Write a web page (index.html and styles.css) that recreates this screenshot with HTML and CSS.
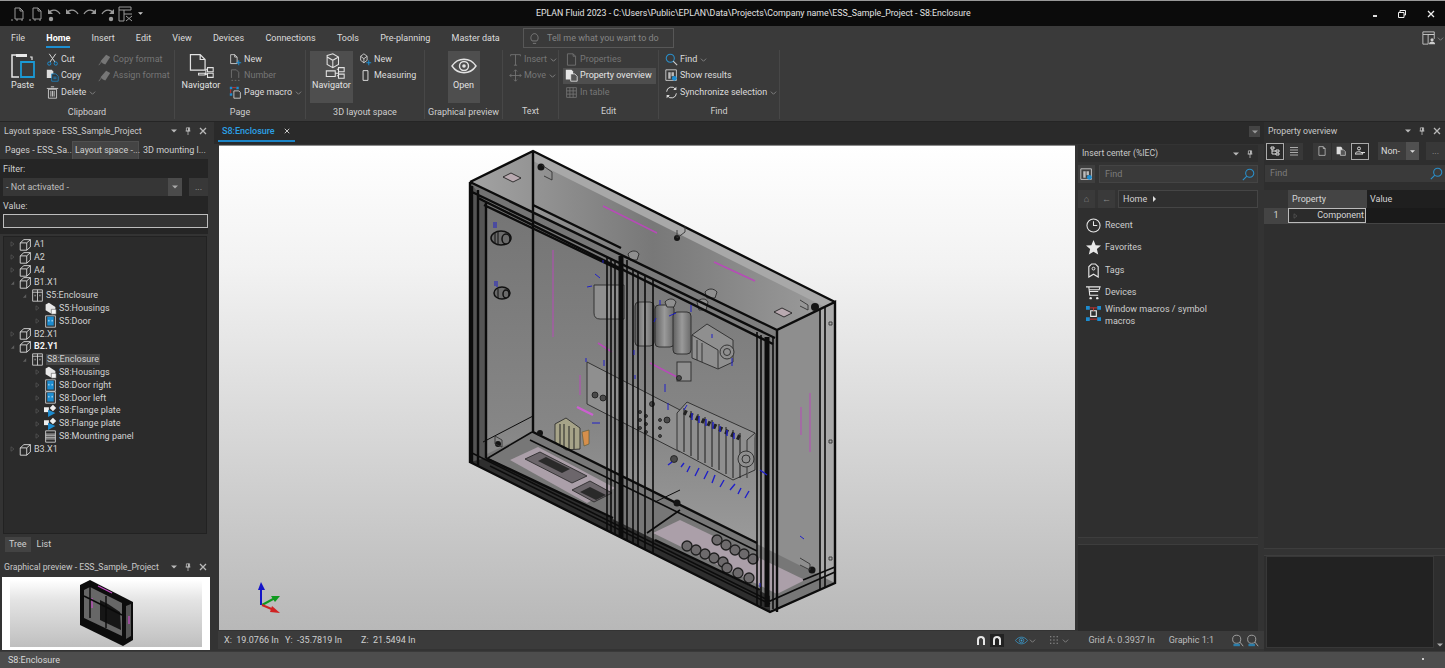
FILE: index.html
```html
<!DOCTYPE html>
<html lang="en">
<head>
<meta charset="utf-8">
<title>EPLAN Fluid 2023</title>
<link rel="stylesheet" href="styles.css">
</head>
<body>
<svg class="defs" aria-hidden="true">
  <symbol id="i-page" viewBox="0 0 16 16"><path d="M5 13V2h5l3 3v8zM10 2v3h3" fill="none" stroke="currentColor"/><path d="M1 14h14" stroke="currentColor" stroke-dasharray="2 3"/></symbol>
  <symbol id="i-undo" viewBox="0 0 16 16"><path d="M3 7c2-4 8-4 11 1" fill="none" stroke="currentColor" stroke-width="1.300"/><path d="M2 3v5h5z" fill="currentColor"/></symbol>
  <symbol id="i-undod" viewBox="0 0 16 16"><path d="M3 7c2-4 8-4 11 1" fill="none" stroke="currentColor" stroke-width="1.300"/><path d="M2 3v5h5z" fill="currentColor"/><circle cx="5" cy="13" r="2.200" fill="currentColor"/></symbol>
  <symbol id="i-redo" viewBox="0 0 16 16"><path d="M13 7c-2-4-8-4-11 1" fill="none" stroke="currentColor" stroke-width="1.300"/><path d="M14 3v5H9z" fill="currentColor"/></symbol>
  <symbol id="i-redod" viewBox="0 0 16 16"><path d="M13 7c-2-4-8-4-11 1" fill="none" stroke="currentColor" stroke-width="1.300"/><path d="M14 3v5H9z" fill="currentColor"/><circle cx="11" cy="13" r="2.200" fill="currentColor"/></symbol>
  <symbol id="i-tbl" viewBox="0 0 16 16"><path d="M1 1h12v3H1zM1 4v11h5V4M6 8h8M8 10l6 5M14 10l-6 5" fill="none" stroke="currentColor"/></symbol>
  <symbol id="i-lay" viewBox="0 0 16 16"><path d="M1 1h13v3H1zM1 4v11h6V4M7 4h7v5" fill="none" stroke="currentColor"/><circle cx="11.500" cy="10" r="1.800" fill="currentColor"/><path d="M8 15c0-4 7-4 7 0z" fill="currentColor"/></symbol>
  <symbol id="i-cube" viewBox="0 0 16 16"><path d="M1.500 6 6 2h8v9l-4.500 4h-8zM1.500 6h8v9M9.500 6 14 2" fill="none" stroke="currentColor" stroke-width="1.100"/></symbol>
  <symbol id="i-encl" viewBox="0 0 16 16"><path d="M2 1h12v14H2zM8 1v14M5 7v2M11 7v2M2 4h12" fill="none" stroke="currentColor"/></symbol>
  <symbol id="i-house" viewBox="0 0 16 16"><path d="M2 3 6 1l8 5v8l-4 1-8-5z" fill="#e8e8e8"/><path d="M9 9h6v6H9z" fill="#f6f6f6" stroke="#333" stroke-width=".6"/></symbol>
  <symbol id="i-door" viewBox="0 0 16 16"><path d="M2 1h12v14H2z" fill="none" stroke="#ddd"/><path d="M4 2h8v11H4z" fill="#1c8cd0"/><path d="M6 6v2M10 6v2" stroke="#fff"/></symbol>
  <symbol id="i-flange" viewBox="0 0 16 16"><path d="M0 4h6v6H0z" fill="#eee"/><path d="M7 5l4-4 4 4-4 4z" fill="#eee"/><path d="M5 7l9 4-9 5z" fill="#1c8cd0"/></symbol>
  <symbol id="i-panel" viewBox="0 0 16 16"><path d="M2 1h12v14H2zM2 5h12M2 11h12M2 7h12M2 9h12" fill="none" stroke="#ddd"/></symbol>
  <symbol id="i-nav" viewBox="0 0 32 32"><path d="M3 2h12l6 6v13H3zM15 2v6h6" fill="none" stroke="currentColor" stroke-width="1.500"/><path d="M13 27h8v-2h-8zM24 18h7v5h-7zM24 25h7v5h-7zM21 26h3M22 20h2M22 20v7" fill="none" stroke="currentColor" stroke-width="1.300"/></symbol>
  <symbol id="i-nav3" viewBox="0 0 32 32"><path d="M10 3 17 1l7 4v9l-7 4-7-4zM10 5l7 4 7-4M17 9v9" fill="none" stroke="currentColor" stroke-width="1.300"/><path d="M9 22h11v7H9zM24 18h7v5h-7zM24 26h7v5h-7zM20 25h4M22 20h2v8h-2" fill="none" stroke="currentColor" stroke-width="1.300"/></symbol>
  <symbol id="i-paste" viewBox="0 0 26 26"><path d="M9 2H2v22h7" fill="none" stroke="#e8e8e8" stroke-width="1.500"/><path d="M6 1h11v3H6z" fill="#e8e8e8"/><path d="M11 9h13v15H11z" fill="none" stroke="#1b9ad6" stroke-width="1.800"/><path d="M20 4h2v3" fill="none" stroke="#e8e8e8" stroke-width="1.200"/></symbol>
  <symbol id="i-cut" viewBox="0 0 16 16"><path d="M4 1l7 10M12 1 5 11" stroke="currentColor" fill="none" stroke-width="1.200"/><circle cx="4" cy="13" r="2" fill="none" stroke="#1c8cd0" stroke-width="1.200"/><circle cx="12" cy="13" r="2" fill="none" stroke="#1c8cd0" stroke-width="1.200"/></symbol>
  <symbol id="i-copy" viewBox="0 0 16 16"><path d="M1 1h6l2 2v8H1z" fill="currentColor"/><path d="M7 6h5l3 3v6H7z" fill="#333" stroke="#1c8cd0"/><path d="M9 10h4M9 12h4" stroke="#1c8cd0"/></symbol>
  <symbol id="i-del" viewBox="0 0 16 16"><path d="M3 4h10v11H3zM1 3h14M6 1h4M6 6v7M8 6v7M10 6v7" fill="none" stroke="currentColor"/></symbol>
  <symbol id="i-brush" viewBox="0 0 16 16"><path d="M3 10 10 2l5 3-6 9-3-1z" fill="currentColor"/><path d="M1 15l3-4" stroke="currentColor"/></symbol>
  <symbol id="i-newp" viewBox="0 0 16 16"><path d="M2 13V2h5l3 3v8zM7 2v3h3" fill="none" stroke="currentColor"/><path d="M12 9v6M9 12h6" stroke="#1c8cd0" stroke-width="1.300"/></symbol>
  <symbol id="i-num" viewBox="0 0 16 16"><path d="M3 11V1h6l3 3v7M3 14h2M7 14h2M11 14h2" fill="none" stroke="currentColor"/></symbol>
  <symbol id="i-macro" viewBox="0 0 16 16"><path d="M6 6h6l2 2v7H6z" fill="none" stroke="currentColor"/><path d="M1 1h3v3H1zM9 1h3v3H9zM1 9h3v3H1z" fill="#1c8cd0"/><path d="M4 2h5M2 4v5" stroke="#d33"/></symbol>
  <symbol id="i-cubeplus" viewBox="0 0 16 16"><path d="M2 4l4-3 4 3v5l-4 3-4-3zM2 4l4 3 4-3M6 7v5" fill="none" stroke="currentColor"/><path d="M12 9v6M9 12h6" stroke="#1c8cd0" stroke-width="1.300"/></symbol>
  <symbol id="i-meas" viewBox="0 0 16 16"><path d="M5 2h6v12H5z" fill="none" stroke="currentColor" stroke-width="1.200"/></symbol>
  <symbol id="i-eye" viewBox="0 0 26 26"><path d="M1 13C7 4 19 4 25 13 19 22 7 22 1 13z" fill="none" stroke="currentColor" stroke-width="1.400"/><circle cx="13" cy="13" r="4.500" fill="none" stroke="currentColor" stroke-width="1.400"/><circle cx="13" cy="13" r="1.800" fill="currentColor"/></symbol>
  <symbol id="i-t" viewBox="0 0 16 16"><path d="M2 4V2h12v2M8 2v13M6 15h4" fill="none" stroke="currentColor"/></symbol>
  <symbol id="i-move" viewBox="0 0 16 16"><path d="M8 1v14M1 8h14M6 3l2-2 2 2M6 13l2 2 2-2M3 6 1 8l2 2M13 6l2 2-2 2" fill="none" stroke="currentColor"/></symbol>
  <symbol id="i-doc" viewBox="0 0 16 16"><path d="M3 15V1h7l3 3v11zM10 1v3h3" fill="none" stroke="currentColor"/></symbol>
  <symbol id="i-ov" viewBox="0 0 16 16"><path d="M1 1h7l2 2v10H1z" fill="currentColor"/><path d="M7 6h5l3 3v6H7z" fill="#555" stroke="currentColor"/></symbol>
  <symbol id="i-grid" viewBox="0 0 16 16"><path d="M2 2h12v12H2zM2 6h12M2 10h12M6 2v12M10 2v12" fill="none" stroke="currentColor"/></symbol>
  <symbol id="i-find" viewBox="0 0 16 16"><circle cx="6.500" cy="6.500" r="5" fill="none" stroke="#2a8fca" stroke-width="1.300"/><path d="M10 10l5 5" stroke="#2a8fca" stroke-width="1.400"/></symbol>
  <symbol id="i-findr" viewBox="0 0 16 16"><circle cx="6.500" cy="6.500" r="5" fill="none" stroke="#2a8fca" stroke-width="1.300"/><path d="M10 10l5 5" stroke="#ccc" stroke-width="1.400"/></symbol>
  <symbol id="i-zoom" viewBox="0 0 16 16"><circle cx="7" cy="6.500" r="5" fill="none" stroke="#a8a8a8" stroke-width="1.100"/><path d="M11 10l4 5" stroke="#a8a8a8" stroke-width="1.200"/><path d="M3 12h8v3H3z" fill="#2b7ca8"/></symbol>
  <symbol id="i-res" viewBox="0 0 16 16"><path d="M1 1h13v13H1z" fill="none" stroke="#ddd"/><path d="M4 4h3v8H4zM8 4h3v5H8z" fill="#bbb"/><circle cx="11.500" cy="11.500" r="3" fill="#1c8cd0"/></symbol>
  <symbol id="i-sync" viewBox="0 0 16 16"><path d="M2 7a6 6 0 0 1 11-3M14 9A6 6 0 0 1 3 12" fill="none" stroke="#ddd" stroke-width="1.200"/><path d="M14 1v4h-4zM2 15v-4h4z" fill="#ddd"/></symbol>
  <symbol id="i-bulb" viewBox="0 0 16 16"><path d="M5 11C2 8 4 2 8 2s6 6 3 9zM6 14h4" fill="none" stroke="currentColor"/></symbol>
  <symbol id="i-clock" viewBox="0 0 16 16"><circle cx="8" cy="8" r="7" fill="none" stroke="currentColor" stroke-width="1.100"/><path d="M8 3.500V8h4" fill="none" stroke="currentColor" stroke-width="1.100"/></symbol>
  <symbol id="i-star" viewBox="0 0 16 16"><path d="M8 0l2.300 5.500 5.700.4-4.400 3.700 1.400 5.900L8 12.400l-5 3.100 1.400-5.900L0 5.900l5.700-.4z" fill="currentColor"/></symbol>
  <symbol id="i-tag" viewBox="0 0 16 16"><path d="M3 4l3-3h4l3 3v11l-5-3-5 3z" fill="none" stroke="currentColor" stroke-width="1.200"/><circle cx="8" cy="6" r="1.500" fill="none" stroke="currentColor"/></symbol>
  <symbol id="i-cart" viewBox="0 0 16 16"><path d="M0 2h15l-1 3H3M3 2l1 9h9M3 7h10" fill="none" stroke="currentColor" stroke-width="1.100"/><circle cx="5" cy="14" r="1.300" fill="currentColor"/><circle cx="12" cy="14" r="1.300" fill="currentColor"/></symbol>
  <symbol id="i-wm" viewBox="0 0 16 16"><path d="M5 5h6v6H5z" fill="none" stroke="#eee" stroke-width="1.200"/><path d="M3 2h10M3 14h10M8 2v3" stroke="#c33"/><path d="M0 0h4v4H0zM12 0h4v4h-4zM0 12h4v4H0zM12 12h4v4h-4z" fill="#1c8cd0"/></symbol>
  <symbol id="i-x" viewBox="0 0 8 8"><path d="M1 1l6 6M7 1 1 7" stroke="currentColor" stroke-width="1.300"/></symbol>
  <symbol id="i-rest" viewBox="0 0 8 8"><path d="M2 2V.5h5.500V5H6M.5 2.500H6V7.500H.5z" fill="none" stroke="currentColor"/></symbol>
  <symbol id="i-pin" viewBox="0 0 8 10"><path d="M2 1h4v4H2zM1 5h6M4 5v5" stroke="currentColor" fill="none"/><path d="M4 1h2v4H4z" fill="currentColor"/></symbol>
  <symbol id="i-dd" viewBox="0 0 8 8"><path d="M0 2h8L4 6z" fill="currentColor"/></symbol>
  <symbol id="i-chev" viewBox="0 0 8 8"><path d="M1 3l3 3 3-3" fill="none" stroke="currentColor"/></symbol>
  <symbol id="i-tri" viewBox="0 0 6 8"><path d="M1 1l4 3-4 3z" fill="none" stroke="currentColor" stroke-width=".8"/></symbol>
  <symbol id="i-open" viewBox="0 0 6 6"><path d="M5 1v4H1z" fill="currentColor"/></symbol>
</svg>

<header class="titlebar">
  <div class="qa">
    <svg class="ic16"><use href="#i-page"/></svg><svg class="ic16"><use href="#i-page"/></svg>
    <svg class="ic16"><use href="#i-undod"/></svg><svg class="ic16"><use href="#i-undo"/></svg><svg class="ic16"><use href="#i-redo"/></svg><svg class="ic16"><use href="#i-redod"/></svg>
    <svg class="ic16"><use href="#i-tbl"/></svg><svg class="ic6"><use href="#i-dd"/></svg>
  </div>
  <div class="apptitle">EPLAN Fluid 2023 - C:\Users\Public\EPLAN\Data\Projects\Company name\ESS_Sample_Project - S8:Enclosure</div>
  <div class="winbtns">
    <span class="minbtn"></span>
    <svg class="ic8"><use href="#i-rest"/></svg>
    <svg class="ic8"><use href="#i-x"/></svg>
  </div>
</header>

<nav class="tabsbar">
  <span>File</span><span class="cur">Home</span><span>Insert</span><span>Edit</span><span>View</span><span>Devices</span><span>Connections</span><span>Tools</span><span>Pre-planning</span><span>Master data</span>
  <div class="tell"><svg class="ic12"><use href="#i-bulb"/></svg><span>Tell me what you want to do</span></div>
  <div class="layoutbtn"><svg class="ic14"><use href="#i-lay"/></svg><svg class="chev"><use href="#i-chev"/></svg></div>
</nav>

<section class="ribbon">
  <div class="rg g-clip">
    <div class="rb">
      <div class="big w-paste"><svg class="ic26"><use href="#i-paste"/></svg><span>Paste</span></div>
      <div class="col c-clip1">
        <div class="ri"><svg class="ic12"><use href="#i-cut"/></svg>Cut</div>
        <div class="ri"><svg class="ic12"><use href="#i-copy"/></svg>Copy</div>
        <div class="ri"><svg class="ic12"><use href="#i-del"/></svg>Delete<svg class="chev"><use href="#i-chev"/></svg></div>
      </div>
      <div class="col off">
        <div class="ri"><svg class="ic12"><use href="#i-brush"/></svg>Copy format</div>
        <div class="ri"><svg class="ic12"><use href="#i-brush"/></svg>Assign format</div>
      </div>
    </div>
    <div class="rl">Clipboard</div>
  </div>
  <div class="rg g-page">
    <div class="rb">
      <div class="big w-nav"><svg class="ic30"><use href="#i-nav"/></svg><span>Navigator</span></div>
      <div class="col c-page">
        <div class="ri"><svg class="ic12"><use href="#i-newp"/></svg>New</div>
        <div class="ri off"><svg class="ic12"><use href="#i-num"/></svg>Number</div>
        <div class="ri"><svg class="ic12"><use href="#i-macro"/></svg>Page macro<svg class="chev"><use href="#i-chev"/></svg></div>
      </div>
    </div>
    <div class="rl">Page</div>
  </div>
  <div class="rg g-3d">
    <div class="rb">
      <div class="big w-nav3 on"><svg class="ic30"><use href="#i-nav3"/></svg><span>Navigator</span></div>
      <div class="col">
        <div class="ri"><svg class="ic12"><use href="#i-cubeplus"/></svg>New</div>
        <div class="ri"><svg class="ic12"><use href="#i-meas"/></svg>Measuring</div>
      </div>
    </div>
    <div class="rl">3D layout space</div>
  </div>
  <div class="rg g-prev">
    <div class="rb rb-c">
      <div class="big w-open on"><svg class="ic26"><use href="#i-eye"/></svg><span>Open</span></div>
    </div>
    <div class="rl">Graphical preview</div>
  </div>
  <div class="rg g-text">
    <div class="rb">
      <div class="col off">
        <div class="ri"><svg class="ic12"><use href="#i-t"/></svg>Insert<svg class="chev"><use href="#i-chev"/></svg></div>
        <div class="ri"><svg class="ic12"><use href="#i-move"/></svg>Move<svg class="chev"><use href="#i-chev"/></svg></div>
      </div>
    </div>
    <div class="rl">Text</div>
  </div>
  <div class="rg g-edit">
    <div class="rb">
      <div class="col">
        <div class="ri off"><svg class="ic12"><use href="#i-doc"/></svg>Properties</div>
        <div class="ri sel"><svg class="ic12"><use href="#i-ov"/></svg>Property overview</div>
        <div class="ri off"><svg class="ic12"><use href="#i-grid"/></svg>In table</div>
      </div>
    </div>
    <div class="rl">Edit</div>
  </div>
  <div class="rg g-find">
    <div class="rb">
      <div class="col">
        <div class="ri"><svg class="ic12"><use href="#i-findr"/></svg>Find<svg class="chev"><use href="#i-chev"/></svg></div>
        <div class="ri"><svg class="ic12"><use href="#i-res"/></svg>Show results</div>
        <div class="ri"><svg class="ic12"><use href="#i-sync"/></svg>Synchronize selection<svg class="chev"><use href="#i-chev"/></svg></div>
      </div>
    </div>
    <div class="rl">Find</div>
  </div>
</section>

<main class="work">
  <aside class="left">
    <div class="phead"><span>Layout space - ESS_Sample_Project</span><div class="pbtns"><svg class="ic6"><use href="#i-dd"/></svg><svg class="ic8"><use href="#i-pin"/></svg><svg class="ic8"><use href="#i-x"/></svg></div></div>
    <div class="ltabs"><span>Pages - ESS_Sa...</span><span class="act">Layout space -...</span><span class="third">3D mounting l...</span></div>
    <div class="filter">
      <div class="flabel">Filter:</div>
      <div class="frow">
        <div class="fsel"><span>- Not activated -</span><i class="fdrop"><svg class="ic6"><use href="#i-dd"/></svg></i></div>
        <div class="fbtn">...</div>
      </div>
      <div class="flabel">Value:</div>
      <div class="finput"></div>
    </div>
    <div class="tree">
      <div class="row l0"><svg class="tw"><use href="#i-tri"/></svg><svg class="ti"><use href="#i-cube"/></svg>A1</div>
      <div class="row l0"><svg class="tw"><use href="#i-tri"/></svg><svg class="ti"><use href="#i-cube"/></svg>A2</div>
      <div class="row l0"><svg class="tw"><use href="#i-tri"/></svg><svg class="ti"><use href="#i-cube"/></svg>A4</div>
      <div class="row l0"><svg class="tw"><use href="#i-open"/></svg><svg class="ti"><use href="#i-cube"/></svg>B1.X1</div>
      <div class="row l1"><svg class="tw"><use href="#i-open"/></svg><svg class="ti"><use href="#i-encl"/></svg>S5:Enclosure</div>
      <div class="row l2"><svg class="tw"><use href="#i-tri"/></svg><svg class="ti"><use href="#i-house"/></svg>S5:Housings</div>
      <div class="row l2"><svg class="tw"><use href="#i-tri"/></svg><svg class="ti"><use href="#i-door"/></svg>S5:Door</div>
      <div class="row l0"><svg class="tw"><use href="#i-tri"/></svg><svg class="ti"><use href="#i-cube"/></svg>B2.X1</div>
      <div class="row l0 bold"><svg class="tw"><use href="#i-open"/></svg><svg class="ti"><use href="#i-cube"/></svg>B2.Y1</div>
      <div class="row l1"><svg class="tw"><use href="#i-open"/></svg><svg class="ti"><use href="#i-encl"/></svg><span class="hl">S8:Enclosure</span></div>
      <div class="row l2"><svg class="tw"><use href="#i-tri"/></svg><svg class="ti"><use href="#i-house"/></svg>S8:Housings</div>
      <div class="row l2"><svg class="tw"><use href="#i-tri"/></svg><svg class="ti"><use href="#i-door"/></svg>S8:Door right</div>
      <div class="row l2"><svg class="tw"><use href="#i-tri"/></svg><svg class="ti"><use href="#i-door"/></svg>S8:Door left</div>
      <div class="row l2"><svg class="tw"><use href="#i-tri"/></svg><svg class="ti"><use href="#i-flange"/></svg>S8:Flange plate</div>
      <div class="row l2"><svg class="tw"><use href="#i-tri"/></svg><svg class="ti"><use href="#i-flange"/></svg>S8:Flange plate</div>
      <div class="row l2"><svg class="tw"><use href="#i-tri"/></svg><svg class="ti"><use href="#i-panel"/></svg>S8:Mounting panel</div>
      <div class="row l0"><svg class="tw"><use href="#i-tri"/></svg><svg class="ti"><use href="#i-cube"/></svg>B3.X1</div>
    </div>
    <div class="btabs"><span class="act">Tree</span><span>List</span></div>
    <div class="phead ph2"><span>Graphical preview - ESS_Sample_Project</span><div class="pbtns"><svg class="ic6"><use href="#i-dd"/></svg><svg class="ic8"><use href="#i-pin"/></svg><svg class="ic8"><use href="#i-x"/></svg></div></div>
    <div class="preview">
      <svg class="pv" viewBox="10 580 192 67" preserveAspectRatio="none">
        <path d="M80 585 90 580 133 602V640L123 646 80 625z" fill="#0c0c0c"/>
        <path d="M84 590 90 587 122 603V636L84 618z" fill="#676767"/>
        <path d="M126 606 131 604V636L126 639z" fill="#555"/>
        <path d="M100 600 108 604 120 612 121 630 100 620z" fill="#161616"/>
        <path d="M98 586 112 593M92 598v10M129 616v8" stroke="#c14dc1" stroke-width="1.300"/>
        <path d="M90 586V618M106 596V628M84 596 122 615" stroke="#0a0a0a" stroke-width="1.400" fill="none"/>
      </svg>
    </div>
  </aside>

  <div class="dochead">
    <div class="doctab"><span>S8:Enclosure</span><svg class="ic7"><use href="#i-x"/></svg></div>
    <div class="docdd"><svg class="ic6"><use href="#i-dd"/></svg></div>
  </div>

  <section class="viewport">
      <svg class="scene" viewBox="219 146 856 484" preserveAspectRatio="none">
        <defs>
          <linearGradient id="gbg" x1="0" y1="0" x2="0" y2="1"><stop offset="0" stop-color="#fff"/><stop offset=".25" stop-color="#f2f2f2"/><stop offset="1" stop-color="#b8b8b8"/></linearGradient>
          <linearGradient id="gback" x1="0" y1="0" x2="0" y2="1"><stop offset="0" stop-color="#707070"/><stop offset=".6" stop-color="#868686"/><stop offset="1" stop-color="#a6a6a6"/></linearGradient>
          <linearGradient id="gtop" x1="0" y1="0" x2="1" y2="0"><stop offset="0" stop-color="#a3a3a3"/><stop offset=".5" stop-color="#787878"/><stop offset="1" stop-color="#9d9d9d"/></linearGradient>
          <linearGradient id="gcyl" x1="0" y1="0" x2="1" y2="0"><stop offset="0" stop-color="#5f5f5f"/><stop offset=".5" stop-color="#9a9a9a"/><stop offset="1" stop-color="#6a6a6a"/></linearGradient>
        </defs>
        <rect x="219" y="146" width="856" height="484" fill="url(#gbg)"/>
        <path d="M470 182 533 151 835 302V583L770 612 470 462z" fill="url(#gback)"/>
        <path d="M470 182 533 151 835 302 777 330z" fill="url(#gtop)"/>
        <path d="M533 151 835 302 825 307 533 161z" fill="#a8a8a8"/>
        <path d="M777 330 835 302V583L777 610z" fill="#8e8e8e"/>
        <path d="M821 309 835 302V583L821 590z" fill="#a9a9a9"/>
        <path d="M470 462 533 432 835 583 770 612z" fill="#777"/>
        <path d="M470 452 488 458 770 596V612L470 462z" fill="#2e2e2e"/>
        <path d="M470 182V462L486 458V203z" fill="#555"/>
        <!-- floor plates -->
        <path d="M510 460 538 447 615 488 587 503z" fill="#ab9fa9"/>
        <path d="M653 533 680 520 805 580 777 594z" fill="#ab9fa9"/>
        <path d="M525 459 540 452 587 476 572 483z" fill="#6c666b" stroke="#222" stroke-width=".8"/>
        <path d="M538 461 546 457 570 469 562 473z" fill="#2a2a2a"/>
        <path d="M572 490 590 481 612 493 594 502z" fill="#6c666b" stroke="#222" stroke-width=".8"/>
        <path d="M580 492 590 487 606 495 596 500z" fill="#2a2a2a"/>
        <!-- top face details -->
        <path d="M503 177 511 173 521 178 513 182z" fill="#b9a9b0" stroke="#111" stroke-width=".8"/>
        <path d="M774 312 782 308 792 313 784 317z" fill="#b9a9b0" stroke="#111" stroke-width=".8"/>
        <g class="mag">
          <path d="M603 206 657 233M714 262 755 281"/>
          <path d="M553 250V337M810 393V452M801 407V435M580 375V395" class="thin"/>
          <path d="M598 343 612 352M650 363 677 377"/>
          <path d="M577 407 593 415" class="fat"/>
        </g>
        <!-- components -->
        <g class="part">
          <path d="M594 285h30v34h-24q-6 0-6-6z" fill="url(#gcyl)"/>
          <rect class="cyl" x="635" y="302" width="19" height="44" rx="4"/>
          <rect class="cyl" x="655" y="305" width="19" height="42" rx="4"/>
          <rect class="cyl" x="673" y="312" width="18" height="42" rx="4"/>
          <path d="M692 335 707 324 733 340V362L718 369 692 358z"/>
          <path d="M692 335 718 350V369M697 340V360M702 343V362"/>
          <rect x="677" y="362" width="14" height="19"/>
          <path d="M697 302c3-4 9-4 11 0l-2 8h-7zM628 254c3-4 9-4 11 0l-2 6h-7zM705 292c3-4 9-4 12 0l-2 6h-8zM665 302c3-4 9-4 11 0l-2 5h-7z"/>
          <path d="M587 362 680 410V452L587 404z" fill="#a3a3a3"/>
          <path d="M677 413 687 402 755 433V470L733 480 677 450z" fill="#a9a9a9"/>
          <path d="M755 433 747 440V478"/>
        </g>
        <g class="dots"><circle cx="595" cy="395" r="3"/><circle cx="603" cy="398" r="3"/><circle cx="652" cy="404" r="2.500"/><circle cx="667" cy="420" r="3"/><circle cx="674" cy="459" r="3.500"/><circle cx="679" cy="378" r="2.500"/><circle cx="640" cy="412" r="1.500"/><circle cx="640" cy="420" r="1.500"/><circle cx="640" cy="428" r="1.500"/><circle cx="646" cy="416" r="1.500"/><circle cx="646" cy="424" r="1.500"/><circle cx="646" cy="432" r="1.500"/><circle cx="660" cy="420" r="1.500"/><circle cx="660" cy="428" r="1.500"/><circle cx="660" cy="436" r="1.500"/></g>
        <g class="slices">
          <path d="M684 408V452M691 411V456M698 414V460M705 417V463M712 420V467M719 424V470M726 427V474M733 430V478M740 433V478"/>
        </g>
        <path d="M684 412 740 438" stroke="#222" stroke-width="5" stroke-dasharray="3 3.500" fill="none"/>
        <g class="part"><circle cx="746" cy="459" r="8"/><circle cx="746" cy="459" r="4"/><circle cx="727" cy="352" r="7"/><circle cx="727" cy="352" r="3.500"/></g>
        <g class="gland"><ellipse cx="501" cy="238" rx="10" ry="7"/><ellipse cx="506" cy="239" rx="4" ry="5"/><path d="M495 233v10M498 232v12"/><ellipse cx="502" cy="293" rx="8" ry="6"/><ellipse cx="506" cy="294" rx="3" ry="4"/><path d="M498 289v9"/></g>
        <!-- small terminal block -->
        <path d="M555 424 566 418 580 428V449L566 450 555 442z" fill="#a6a388" stroke="#222" stroke-width=".8"/>
        <path d="M560 424V444M564 424V448M569 426V449M574 428V449" stroke="#222"/>
        <path d="M582 432 589 430V444L584 446z" fill="#d68f4c" stroke="#553" stroke-width=".6"/>
        <!-- floor glands -->
        <g class="fg">
          <circle cx="687" cy="546" r="5"/><circle cx="696" cy="550" r="5"/><circle cx="705" cy="554" r="5"/><circle cx="714" cy="558" r="5"/><circle cx="723" cy="562" r="5"/>
          <circle cx="717" cy="540" r="5"/><circle cx="726" cy="545" r="5"/><circle cx="735" cy="550" r="5"/><circle cx="744" cy="554" r="5"/><circle cx="753" cy="559" r="5"/>
          <circle cx="727" cy="568" r="5"/><circle cx="738" cy="573" r="5"/><circle cx="749" cy="578" r="5"/>
        </g>
        <!-- frame -->
        <g class="fr">
          <path d="M470 182 533 151 835 302M533 151V433M470 182V462L770 612 835 583V302L777 330V612M470 182 777 330" class="w3"/>
          <path d="M472 186V463M478 190V466M470 191 775 338M478 198 773 344M533 205 621 248" class="w3"/>
          <path d="M486 203V458M484 205 620 270M486 458 613 518M655 540 760 590M533 432 757 543" class="w3"/>
          <path d="M470 452 770 601 835 572M488 458 532 432M647 533 680 510M803 580 835 567M530 440 757 551M490 466 770 604" class="w2"/>
          <path d="M607 258V530M615 262V534M633 270V543M645 276V549M653 280V553M757 332V605M820 310V590M825 307V587" class="w2"/>
          <path d="M621 256V537M767 337V607" class="w5"/>
          <path d="M761 335V606M773 337V609M627 260V540M611 260V532M638 272V546" class="w2"/>
          <path d="M483 442 533 416M655 502 680 490" class="w1"/>
        </g>
        <g class="hw">
          <circle cx="541" cy="167" r="3.500"/><circle cx="677" cy="238" r="3"/><circle cx="815" cy="307" r="4"/><circle cx="498" cy="444" r="3"/><circle cx="677" cy="503" r="3.500"/><circle cx="812" cy="570" r="3.500"/><circle cx="540" cy="433" r="3"/>
        </g>
        <path d="M542 165 552 172V180L544 176M677 230V238L685 232V226M800 300l8 5v5l-8-4M829 322h3v3h-3zM829 440h3v3h-3zM829 557h3v3h-3zM800 558l10 6v6l-10-5M495 436l7 4v7l-7-3z" fill="none" stroke="#333" stroke-width=".9"/>
        <g class="blue">
          <path d="M494 222V228M496 222V228M495 281V286M497 281V287M603 260V263M595 274 600 278M587 287 592 286M660 300 660 305M656 318 654 322M691 305V312M669 316 676 313M712 334V338M732 358V366M586 358V362M604 360V366M634 350V355M635 375V379M665 384V392M668 403V410M687 405 684 410"/>
          <path d="M668 465 672 462M681 467 684 463M687 472 690 466M695 476 699 468M704 479 708 471M712 483 715 475M720 487 724 480M730 490 735 484M738 494 741 488M745 498 749 491M767 475 760 470M692 413V420M699 416V423M706 419V426M713 422V429M720 426V432M727 430V436M734 433V439" class="b2"/>
          <path d="M592 423h8M800 536l4 3M760 583v4"/>
        </g>
        <!-- axes -->
        <g class="ax">
          <path d="M261 605V589" stroke="#1414c8"/><path d="M261 582 258 590H265z" fill="#1414c8"/>
          <path d="M262 605 275 598" stroke="#0f9a1f"/><path d="M280 596 271 596 275 602z" fill="#0f9a1f"/>
          <path d="M262 605 274 610" stroke="#d02222"/><path d="M280 613 272 606 270 612z" fill="#d02222"/>
        </g>
      </svg>
  </section>

  <aside class="insert">
    <div class="phead"><span>Insert center (%IEC)</span><div class="pbtns"><svg class="ic6"><use href="#i-dd"/></svg><svg class="ic8"><use href="#i-pin"/></svg></div></div>
    <div class="srow"><div class="sq"><svg class="ic12"><use href="#i-res"/></svg></div><div class="search"><span>Find</span><svg class="ic12 mir"><use href="#i-find"/></svg></div></div>
    <div class="hrow"><div class="sq2">⌂</div><div class="sq2">←</div><div class="crumb"><span>Home</span><span class="crumbarrow"></span></div></div>
    <div class="ilist">
      <div class="it"><svg class="ic15"><use href="#i-clock"/></svg><span>Recent</span></div>
      <div class="it"><svg class="ic15"><use href="#i-star"/></svg><span>Favorites</span></div>
      <div class="it"><svg class="ic15"><use href="#i-tag"/></svg><span>Tags</span></div>
      <div class="it"><svg class="ic15"><use href="#i-cart"/></svg><span>Devices</span></div>
      <div class="it two"><svg class="ic15"><use href="#i-wm"/></svg><span>Window macros / symbol macros</span></div>
    </div>
    <div class="split"></div>
    <div class="lowbox"></div>
  </aside>

  <div class="vstatus">
    <div class="coords"><span class="cx">X:&nbsp; 19.0766 In</span><span class="cy">Y:&nbsp; -35.7819 In</span><span>Z:&nbsp; 21.5494 In</span></div>
    <div class="vright">
      <span class="mag1"></span><span class="mag2"><span class="mag1 wh"></span></span>
      <svg class="ic12 eye"><use href="#i-eye"/></svg><svg class="chev"><use href="#i-chev"/></svg>
      <svg class="ic12 dotsg" viewBox="0 0 12 12"><path d="M2 2h1v1H2zM5 2h1v1H5zM8 2h1v1H8zM2 5h1v1H2zM5 5h1v1H5zM8 5h1v1H8zM2 8h1v1H2zM5 8h1v1H5zM8 8h1v1H8z" fill="currentColor"/></svg><svg class="chev"><use href="#i-chev"/></svg>
      <span class="grid-a">Grid A: 0.3937 In</span><span class="graphic">Graphic 1:1</span>
      <svg class="ic12"><use href="#i-zoom"/></svg><svg class="ic12 z2"><use href="#i-zoom"/></svg>
    </div>
  </div>

  <aside class="props">
    <div class="phead"><span>Property overview</span><div class="pbtns"><svg class="ic6"><use href="#i-dd"/></svg><svg class="ic8"><use href="#i-pin"/></svg><svg class="ic8"><use href="#i-x"/></svg></div></div>
    <div class="ptools">
      <div class="tb on"><svg class="ic10" viewBox="0 0 10 10"><path d="M1 1h3v2H1zM6 4h3v2H6zM6 7h3v2H6zM2 3v5h4M2 5h4" fill="none" stroke="currentColor"/></svg></div>
      <div class="tb"><svg class="ic10" viewBox="0 0 10 10"><path d="M1 1.500h8M1 4h8M1 6.500h8M1 9h8" stroke="currentColor" stroke-width=".7"/></svg></div>
      <div class="tgap"></div>
      <div class="tb"><svg class="ic10"><use href="#i-doc"/></svg></div>
      <div class="tb"><svg class="ic10"><use href="#i-ov"/></svg></div>
      <div class="tb on"><svg class="ic10" viewBox="0 0 10 10"><circle cx="4" cy="2.500" r="1.500" fill="none" stroke="currentColor"/><path d="M0 8c0-3 7-3 8 0z" fill="none" stroke="currentColor"/><path d="M6 6h4v1H6z" fill="currentColor"/></svg></div>
      <div class="psel"><span>Non-</span><i><svg class="ic5"><use href="#i-dd"/></svg></i></div>
      <div class="pdots">...</div>
    </div>
    <div class="psearch"><span>Find</span><svg class="ic12 mir"><use href="#i-find"/></svg></div>
    <div class="ghead"><div class="gc0"></div><div class="gc1">Property</div><div class="gc2">Value</div></div>
    <div class="grow"><div class="gn">1</div><div class="gsel"><svg class="tw"><use href="#i-tri"/></svg><span>Component</span></div><div class="gval"></div></div>
    <div class="pspace"></div>
    <div class="split"></div>
    <div class="lowrow"><div class="lowbox2"></div><svg class="ic6"><use href="#i-dd"/></svg></div>
  </aside>
</main>

<footer class="status"><span>S8:Enclosure</span><span class="grip"></span></footer>
</body>
</html>
```

FILE: styles.css
```css
* { box-sizing: border-box; }
html, body { margin: 0; padding: 0; }
body {
  width: 1445px; height: 668px; overflow: hidden;
  background: #2e2e2e; color: #d6d6d6;
  font: 9px/1.2 Roboto, "Liberation Sans", sans-serif;
  display: flex; flex-direction: column;
}
svg { display: block; flex: none; }
.defs { width: 0; height: 0; position: absolute; }
.ic16 { width: 16px; height: 16px; }
.ic15 { width: 15px; height: 15px; }
.ic14 { width: 14px; height: 14px; }
.ic12 { width: 13px; height: 13px; }
.ic10 { width: 10px; height: 10px; }
.ic8 { width: 8px; height: 8px; }
.ic7 { width: 6px; height: 6px; }
.ic6 { width: 6px; height: 6px; }
.ic5 { width: 5px; height: 5px; }
.ic26 { width: 26px; height: 26px; }
.ic30 { width: 28px; height: 26px; }
.chev { width: 7px; height: 7px; margin-left: 1px; color: #888; }

/* title */
.titlebar { height: 26px; flex: none; background: #0b0b0b; border-top: 1px solid #999; display: flex; align-items: center; position: relative; }
.qa { display: flex; gap: 2px; padding-left: 10px; width: 536px; color: #9a9a9a; align-items: center; }
.qa .ic6 { color: #ccc; margin-left: 2px; width: 5px; height: 5px; }
.apptitle { flex: 1; color: #e4e4e4; white-space: nowrap; font-size: 8.800px; }
.winbtns { display: flex; align-items: center; gap: 21px; padding-right: 10px; color: #eee; }
.minbtn { width: 4px; height: 2px; background: #ddd; margin-top: 4px; }

/* tabs */
.tabsbar { height: 24px; flex: none; background: #3a3a3a; display: flex; align-items: center; gap: 21.200px; padding-left: 11px; font-size: 9px; color: #dcdcdc; position: relative; }
.tabsbar > span { position: relative; line-height: 24px; }
.tabsbar .cur { font-weight: 700; color: #fff; }
.tabsbar .cur::after { content: ""; position: absolute; left: 0; right: 0; bottom: 2px; height: 2px; background: #1d8fd2; }
.tell { width: 151px; height: 20px; margin-left: 2px; border: 1px solid #575757; display: flex; align-items: center; gap: 6px; padding-left: 4px; color: #858585; }
.layoutbtn { margin-left: auto; margin-right: 1px; color: #ccc; display: flex; align-items: center; }

/* ribbon */
.ribbon { height: 72px; flex: none; background: #3a3a3a; display: flex; border-bottom: 1px solid #252525; }
.rg { border-right: 1px solid #474747; display: flex; flex-direction: column; height: 69px; }
.g-clip { width: 175px; } .g-page { width: 131px; } .g-3d { width: 119px; } .g-prev { width: 78px; }
.g-text { width: 56px; } .g-edit { width: 100px; } .g-find { width: 121px; }
.rb { height: 53px; display: flex; padding-top: 1px; }
.rb-c { justify-content: center; }
.rl { flex: 1; text-align: center; line-height: 16px; color: #cfcfcf; padding-top: 1px; }
.big { display: flex; flex-direction: column; align-items: center; height: 52px; color: #e2e2e2; }
.big span { margin-top: auto; padding-bottom: 12px; }
.big.on { background: #4e4e4e; }
.w-paste { width: 35px; margin-left: 5px; padding-top: 2px; }
.w-nav { width: 40px; margin-left: 6px; padding-top: 2px; }
.w-nav3 { width: 43px; margin-left: 4px; padding-top: 2px; }
.w-open { width: 32px; padding-top: 2px; }
.col { display: flex; flex-direction: column; padding-left: 6px; }
.c-page { padding-left: 8px; }
.c-clip1 { width: 58px; }
.g-clip .col { padding-left: 6px; }
.g-clip .off { padding-left: 0; }
.ri { height: 16.500px; display: flex; align-items: center; gap: 2px; white-space: nowrap; color: #dcdcdc; }
.off, .off .ri { color: #767676; }
.ri.sel { background: #4e4e4e; margin-left: -2px; padding-left: 2px; padding-right: 4px; color: #e6e6e6; }

/* main */
.work { height: 529px; flex: none; display: grid; grid-template-columns: 214px 861px 189px 181px; grid-template-rows: 22px 487px 20px; background: #333; }
.phead { height: 18px; display: flex; align-items: center; justify-content: space-between; padding-left: 4px; color: #c9c9c9; flex: none; font-size: 8.700px; white-space: nowrap; }
.pbtns { display: flex; align-items: center; gap: 7px; padding-right: 3px; color: #b9b9b9; }
.left { grid-column: 1; grid-row: 1 / 4; display: flex; flex-direction: column; min-width: 0; padding-right: 4px; background: #333; }
.ltabs { height: 19px; display: flex; padding: 1px 0 0 5px; color: #cfcfcf; align-items: center; white-space: nowrap; flex: none; }
.ltabs span { width: 67px; }
.ltabs .act { background: #444; border: 1px solid #4f4f4f; border-bottom: 0; line-height: 17px; height: 18px; padding-left: 2px; }
.ltabs .third { margin-left: 4px; width: 64px; }
.filter { background: #252525; height: 75px; padding: 4px 0 0 3px; display: flex; flex-direction: column; flex: none; margin-right: 2px; }
.flabel { height: 12px; color: #cfcfcf; line-height: 12px; }
.frow { display: flex; gap: 7px; height: 18px; margin: 3px 0 4px; }
.fsel { width: 179px; background: #363636; display: flex; align-items: center; justify-content: space-between; padding-left: 3px; color: #bdbdbd; }
.fdrop { width: 14px; height: 18px; background: #4b4b4b; display: flex; align-items: center; justify-content: center; color: #aaa; }
.fbtn { width: 19px; background: #383838; text-align: center; line-height: 18px; color: #aaa; }
.finput { height: 14px; width: 205px; margin-top: 2px; background: #333; border: 1px solid #bdbdbd; }
.tree { flex: none; height: 298px; margin: 2px 3px 0 3px; background: #2b2b2b; border: 1px solid #222; padding-top: 1px; }
.row { height: 12.800px; display: flex; align-items: center; white-space: nowrap; color: #d2d2d2; }
.l0 { padding-left: 6px; } .l1 { padding-left: 18px; } .l2 { padding-left: 31px; }
.tw { width: 5px; height: 6px; color: #5e5e5e; margin-right: 4px; }
.ti { width: 13px; height: 13px; margin-right: 2px; color: #ddd; }
.bold { font-weight: 700; color: #f2f2f2; }
.hl { background: #474747; padding: 0 1px; }
.btabs { height: 17px; display: flex; align-items: center; padding-left: 5px; color: #cfcfcf; flex: none; margin-top: 2px; }
.btabs span { padding: 2px 4px; margin-right: 2px; }
.btabs .act { background: #434343; }
.ph2 { margin-top: 5px; }
.preview { height: 73px; margin: 1px 0 0 2px; width: 208px; flex: none; background: #fff; padding: 3px 8px; }
.pv { width: 192px; height: 67px; background: linear-gradient(#fff, #e4e4e4 30%, #bfbfbf); }

/* center */
.dochead { grid-column: 2 / 4; grid-row: 1; display: flex; justify-content: space-between; background: #2a2a2a; padding-left: 4px; }
.doctab { width: 77px; height: 20px; border-bottom: 2px solid #1b84c6; display: flex; align-items: center; gap: 9px; color: #2aa0e6; padding-left: 4px; font-weight: 500; white-space: nowrap; }
.doctab .ic7 { color: #ccc; }
.docdd { width: 11px; height: 11px; margin: 4px 4px 0 0; background: #444; display: flex; align-items: center; justify-content: center; color: #999; }
.viewport { grid-column: 2; grid-row: 2; padding: 1px 0 0 5px; background: #333; min-width: 0; }
.scene { width: 856px; height: 485px; border-top: 1px solid #8a8a8a; }
.vstatus { grid-column: 2 / 4; grid-row: 3; height: 18px; background: #3b3b3b; display: flex; justify-content: space-between; align-items: center; padding: 0 5px 0 6px; margin-left: 4px; margin-right: 0; color: #cfcfcf; }
.coords { display: flex; white-space: nowrap; }
.cx { width: 61px; }
.cy { width: 76px; }
.vright { display: flex; align-items: center; color: #bdbdbd; white-space: nowrap; }
.mag1 { width: 8px; height: 9px; border: 2px solid #e6e6e6; border-bottom: 0; border-radius: 4px 4px 0 0; display: block; }
.mag2 { background: #222; width: 14px; height: 13px; display: flex; align-items: center; justify-content: center; margin-left: 5px; }
.eye { margin-left: 11px; color: #3a9dd1; }
.dotsg { margin-left: 12px; color: #aaa; }
.grid-a { margin-left: 19px; }
.graphic { margin: 0 17px 0 14px; }
.z2 { margin-left: 2px; }

/* insert */
.insert { grid-column: 3; grid-row: 2; display: flex; flex-direction: column; padding: 1px 6px 0 3px; background: #333; min-width: 0; min-height: 0; }
.insert .phead { height: 17px; background: #2e2e2e; padding-left: 4px; }
.insert .pbtns { padding-right: 4px; }
.srow { display: flex; gap: 4px; height: 18px; margin-top: 3px; flex: none; }
.sq { width: 17px; background: #3f3f3f; display: flex; align-items: center; justify-content: center; }
.search { flex: 1; background: #3a3a3a; border: 1px solid #444; display: flex; align-items: center; justify-content: space-between; padding: 0 2px 0 5px; color: #7d7d7d; }
.mir { transform: scaleX(-1); }
.hrow { display: flex; gap: 3px; height: 18px; margin-top: 7px; flex: none; color: #8a8a8a; }
.sq2 { width: 17px; background: #3a3a3a; text-align: center; line-height: 18px; font-size: 9px; }
.crumb { flex: 1; border: 1px solid #454545; background: #2f2f2f; display: flex; align-items: center; gap: 6px; padding-left: 4px; color: #d2d2d2; }
.crumbarrow { width: 0; height: 0; border-left: 3px solid #ddd; border-top: 3px solid transparent; border-bottom: 3px solid transparent; }
.ilist { flex: 1; padding: 6px 0 0 8px; background: #2f2f2f; min-height: 0; }
.it { display: flex; align-items: center; gap: 4px; height: 22.500px; color: #cdcdcd; }
.it svg { color: #e8e8e8; }
.it.two { height: 26px; align-items: flex-start; line-height: 12px; width: 130px; margin-top: -1px; }
.it.two svg { margin-top: 3px; }
.split { height: 8px; flex: none; background: #333; border-top: 1px solid #3d3d3d; border-bottom: 1px solid #3d3d3d; }
.lowbox { height: 86px; flex: none; background: #2b2b2b; }
.lowrow { display: flex; align-items: flex-end; gap: 3px; height: 95px; flex: none; color: #aaa; padding-bottom: 3px; }
.lowbox2 { height: 92px; width: 168px; flex: none; background: #222; border: 1px solid #383838; margin: 0 0 0 2px; }

/* props */
.props { grid-column: 4; grid-row: 1 / 4; display: flex; flex-direction: column; background: #2e2e2e; min-width: 0; }
.props .pbtns { padding-right: 4px; }
.ptools { display: flex; align-items: center; height: 20px; padding-left: 2px; gap: 1px; flex: none; color: #ddd; margin-top: 1px; }
.tb { width: 18px; height: 17px; display: flex; align-items: center; justify-content: center; background: #383838; }
.tb.on { border: 1px solid #aaa; background: #2a2a2a; }
.tgap { width: 8px; height: 17px; }
.psel { margin-left: 8px; width: 41px; height: 18px; background: #3c3c3c; display: flex; align-items: center; justify-content: space-between; padding-left: 3px; flex: none; }
.psel i { width: 13px; height: 18px; background: #505050; display: flex; align-items: center; justify-content: center; }
.pdots { margin-left: 6px; flex: 1; height: 18px; background: #383838; text-align: center; line-height: 18px; color: #999; }
.psearch { height: 17px; margin: 4px 0 0 1px; background: #3a3a3a; display: flex; align-items: center; justify-content: space-between; padding: 0 2px 0 5px; color: #7d7d7d; flex: none; }
.ghead { display: flex; height: 18px; margin-top: 8px; flex: none; line-height: 18px; }
.gc0 { width: 24px; background: #333; }
.gc1 { width: 79px; background: #444; padding-left: 4px; }
.gc2 { flex: 1; background: #1f1f1f; padding-left: 3px; }
.grow { display: flex; height: 15px; flex: none; }
.gn { width: 24px; background: #444; text-align: center; line-height: 15px; }
.gsel { width: 78px; border: 1px solid #bbb; background: #2b2b2b; display: flex; align-items: center; justify-content: space-between; padding: 0 1px 0 4px; flex: none; }
.gval { flex: 1; background: #1a1a1a; }
.pspace { flex: 1; background: #2f2f2f; border-top: 1px solid #444; }

.status { flex: 1; background: #4d4d4d; color: #d8d8d8; padding: 3px 21px 0 8px; border-top: 1px solid #3a3a3a; display: flex; justify-content: space-between; }
.grip { width: 2px; height: 2px; background: #ccc; margin-top: 3px; }

/* scene */
.fr path { fill: none; stroke: #0c0c0c; }
.w1 { stroke-width: 1; } .w2 { stroke-width: 1.600; } .w3 { stroke-width: 2.400; } .w5 { stroke-width: 5; }
.mag path { fill: none; stroke: #b74bb8; stroke-width: 1.500; }
.mag .thin { stroke-width: 1; }
.mag .fat { stroke-width: 2.500; stroke: #cc5fd0; }
.part path, .part rect, .part circle { fill: #8f8f8f; stroke: #2a2a2a; stroke-width: .9; }
.part .cyl { fill: url(#gcyl); }
.dots circle { fill: #4a4a4a; stroke: #111; stroke-width: .7; }
.slices path { stroke: #1c1c1c; stroke-width: 1; fill: none; }
.gland ellipse { fill: #6a6a6a; stroke: #111; stroke-width: 1.500; }
.gland path { stroke: #111; fill: none; }
.fg circle { fill: #6d6a6c; stroke: #1f1f1f; stroke-width: 1.300; }
.hw circle { fill: #141414; }
.blue path { stroke: #2020c8; stroke-width: 1; fill: none; }
.blue .b2 { stroke-width: 1.400; }
.ax path[stroke] { stroke-width: 2; fill: none; }
```
